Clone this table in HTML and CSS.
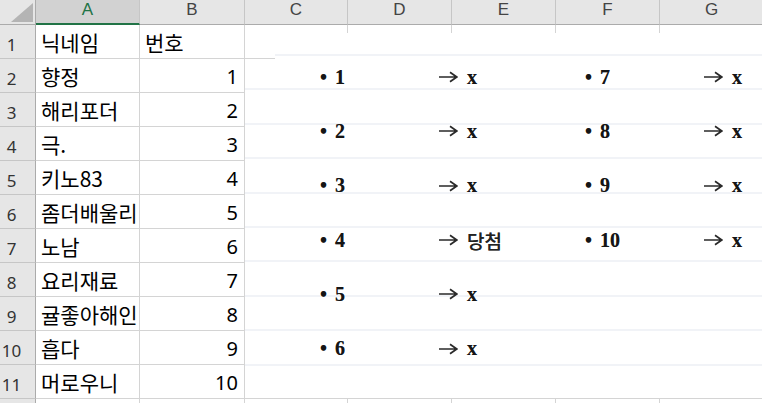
FILE: index.html
```html
<!DOCTYPE html>
<html lang="ko">
<head>
<meta charset="utf-8">
<title>Sheet</title>
<link rel="stylesheet" href="styles.css">
</head>
<body>
<div class="wrap">
  <div class="sheet">
    <div class="corner"><svg width="36" height="25" viewBox="0 0 36 25"><polygon points="33,3 33,22 11,22" fill="#b4b4b4"/></svg></div>
    <div class="ch sel">A</div><div class="ch">B</div><div class="ch">C</div><div class="ch">D</div><div class="ch">E</div><div class="ch">F</div><div class="ch">G</div>

    <div class="rh">1</div><div class="c">닉네임</div><div class="c">번호</div><div class="c"></div><div class="c"></div><div class="c"></div><div class="c"></div><div class="c"></div>
    <div class="rh">2</div><div class="c">향정</div><div class="c n">1</div><div class="c"></div><div class="c"></div><div class="c"></div><div class="c"></div><div class="c"></div>
    <div class="rh">3</div><div class="c">해리포더</div><div class="c n">2</div><div class="c"></div><div class="c"></div><div class="c"></div><div class="c"></div><div class="c"></div>
    <div class="rh">4</div><div class="c">극.</div><div class="c n">3</div><div class="c"></div><div class="c"></div><div class="c"></div><div class="c"></div><div class="c"></div>
    <div class="rh">5</div><div class="c">키노83</div><div class="c n">4</div><div class="c"></div><div class="c"></div><div class="c"></div><div class="c"></div><div class="c"></div>
    <div class="rh">6</div><div class="c">좀더배울리</div><div class="c n">5</div><div class="c"></div><div class="c"></div><div class="c"></div><div class="c"></div><div class="c"></div>
    <div class="rh">7</div><div class="c">노남</div><div class="c n">6</div><div class="c"></div><div class="c"></div><div class="c"></div><div class="c"></div><div class="c"></div>
    <div class="rh">8</div><div class="c">요리재료</div><div class="c n">7</div><div class="c"></div><div class="c"></div><div class="c"></div><div class="c"></div><div class="c"></div>
    <div class="rh">9</div><div class="c">귤좋아해인</div><div class="c n">8</div><div class="c"></div><div class="c"></div><div class="c"></div><div class="c"></div><div class="c"></div>
    <div class="rh">10</div><div class="c">흡다</div><div class="c n">9</div><div class="c"></div><div class="c"></div><div class="c"></div><div class="c"></div><div class="c"></div>
    <div class="rh">11</div><div class="c">머로우니</div><div class="c n">10</div><div class="c"></div><div class="c"></div><div class="c"></div><div class="c"></div><div class="c"></div>
    <div class="rh"></div><div class="c"></div><div class="c"></div><div class="c"></div><div class="c"></div><div class="c"></div><div class="c"></div><div class="c"></div>
  </div>

  <div class="picture">
    <div class="cols">
      <div class="col">
        <div class="item"><span class="label"><span class="dot">•</span>1</span><svg class="arrow" width="20" height="12" viewBox="0 0 20 12"><path d="M1 6H18.5M12 1.2L18.8 6L12 10.8" fill="none" stroke="#2a2a2a" stroke-width="1.7"/></svg><span class="res">x</span></div>
        <div class="item"><span class="label"><span class="dot">•</span>2</span><svg class="arrow" width="20" height="12" viewBox="0 0 20 12"><path d="M1 6H18.5M12 1.2L18.8 6L12 10.8" fill="none" stroke="#2a2a2a" stroke-width="1.7"/></svg><span class="res">x</span></div>
        <div class="item"><span class="label"><span class="dot">•</span>3</span><svg class="arrow" width="20" height="12" viewBox="0 0 20 12"><path d="M1 6H18.5M12 1.2L18.8 6L12 10.8" fill="none" stroke="#2a2a2a" stroke-width="1.7"/></svg><span class="res">x</span></div>
        <div class="item"><span class="label"><span class="dot">•</span>4</span><svg class="arrow" width="20" height="12" viewBox="0 0 20 12"><path d="M1 6H18.5M12 1.2L18.8 6L12 10.8" fill="none" stroke="#2a2a2a" stroke-width="1.7"/></svg><span class="res ko">당첨</span></div>
        <div class="item"><span class="label"><span class="dot">•</span>5</span><svg class="arrow" width="20" height="12" viewBox="0 0 20 12"><path d="M1 6H18.5M12 1.2L18.8 6L12 10.8" fill="none" stroke="#2a2a2a" stroke-width="1.7"/></svg><span class="res">x</span></div>
        <div class="item"><span class="label"><span class="dot">•</span>6</span><svg class="arrow" width="20" height="12" viewBox="0 0 20 12"><path d="M1 6H18.5M12 1.2L18.8 6L12 10.8" fill="none" stroke="#2a2a2a" stroke-width="1.7"/></svg><span class="res">x</span></div>
      </div>
      <div class="col">
        <div class="item"><span class="label"><span class="dot">•</span>7</span><svg class="arrow" width="20" height="12" viewBox="0 0 20 12"><path d="M1 6H18.5M12 1.2L18.8 6L12 10.8" fill="none" stroke="#2a2a2a" stroke-width="1.7"/></svg><span class="res">x</span></div>
        <div class="item"><span class="label"><span class="dot">•</span>8</span><svg class="arrow" width="20" height="12" viewBox="0 0 20 12"><path d="M1 6H18.5M12 1.2L18.8 6L12 10.8" fill="none" stroke="#2a2a2a" stroke-width="1.7"/></svg><span class="res">x</span></div>
        <div class="item"><span class="label"><span class="dot">•</span>9</span><svg class="arrow" width="20" height="12" viewBox="0 0 20 12"><path d="M1 6H18.5M12 1.2L18.8 6L12 10.8" fill="none" stroke="#2a2a2a" stroke-width="1.7"/></svg><span class="res">x</span></div>
        <div class="item"><span class="label"><span class="dot">•</span>10</span><svg class="arrow" width="20" height="12" viewBox="0 0 20 12"><path d="M1 6H18.5M12 1.2L18.8 6L12 10.8" fill="none" stroke="#2a2a2a" stroke-width="1.7"/></svg><span class="res">x</span></div>
      </div>
    </div>
  </div>
</div>
</body>
</html>
```

FILE: styles.css
```css
html, body {
  margin: 0;
  padding: 0;
  background: #ffffff;
  overflow: hidden;
}

.wrap {
  position: relative;
  width: 762px;
  height: 403px;
  overflow: hidden;
}

.sheet {
  display: grid;
  grid-template-columns: 36px 104px 105px 103px 104px 104px 104px 104px;
  grid-template-rows: 25px repeat(12, 34px);
  font-family: "Noto Sans CJK KR", "Noto Sans", sans-serif;
}

.sheet > div {
  box-sizing: border-box;
  white-space: nowrap;
}

.corner {
  background: #e6e6e6;
  border-right: 1px solid #ababab;
  border-bottom: 1px solid #ababab;
}

.corner svg {
  display: block;
}

.ch {
  background: #e6e6e6;
  border-right: 1px solid #c6c6c6;
  border-bottom: 1px solid #ababab;
  color: #444444;
  font-family: "Liberation Sans", Arial, sans-serif;
  font-size: 17px;
  line-height: normal;
  display: flex;
  align-items: flex-start;
  justify-content: center;
}

.ch.sel {
  background: #d2d2d2;
  color: #217346;
  border-bottom: 2px solid #217346;
}

.rh {
  background: #e6e6e6;
  border-right: 1px solid #ababab;
  border-bottom: 1px solid #c6c6c6;
  color: #333333;
  font-family: "Noto Sans", "Open Sans", sans-serif;
  font-size: 17px;
  display: flex;
  align-items: center;
  justify-content: center;
  padding-right: 12px;
  padding-top: 5px;
  overflow: hidden;
}

.c {
  border-right: 1px solid #d4d4d4;
  border-bottom: 1px solid #d4d4d4;
  color: #000000;
  font-size: 21px;
  display: flex;
  align-items: center;
  padding-left: 5px;
  padding-top: 1px;
  overflow: hidden;
}

.c.n {
  justify-content: flex-end;
  padding-right: 6px;
  font-size: 20px;
  font-family: "Noto Sans", "Open Sans", sans-serif;
}

.picture {
  position: absolute;
  left: 245px;
  top: 33px;
  width: 517px;
  height: 365px;
  background-color: #ffffff;
  background-image: repeating-linear-gradient(to bottom,
    rgba(255,255,255,0) 0px,
    rgba(255,255,255,0) 21px,
    #f1f3f7 21px,
    #f1f3f7 23px,
    rgba(255,255,255,0) 23px,
    rgba(255,255,255,0) 34.4px);
  clip-path: polygon(30px 0, 100% 0, 100% 100%, 0 100%, 0 26px, 30px 26px);
}

.cols {
  display: flex;
  padding-top: 17px;
  padding-left: 75px;
}

.col {
  width: 265px;
  flex: 0 0 265px;
  display: flex;
  flex-direction: column;
}

.item {
  height: 54.3px;
  display: flex;
  align-items: center;
  font-family: "Liberation Serif", "DejaVu Serif", serif;
  font-size: 20px;
  font-weight: bold;
  color: #151515;
  text-shadow: 0 0 0.6px rgba(0,0,0,0.5);
}

.label {
  width: 118px;
  flex: 0 0 118px;
  display: flex;
  align-items: center;
}

.dot {
  margin-right: 8px;
}

.arrow {
  display: block;
  margin-right: 9px;
}

.res.ko {
  font-family: "Noto Sans CJK KR", sans-serif;
  font-weight: 500;
  font-size: 19px;
  color: #222222;
}
```
